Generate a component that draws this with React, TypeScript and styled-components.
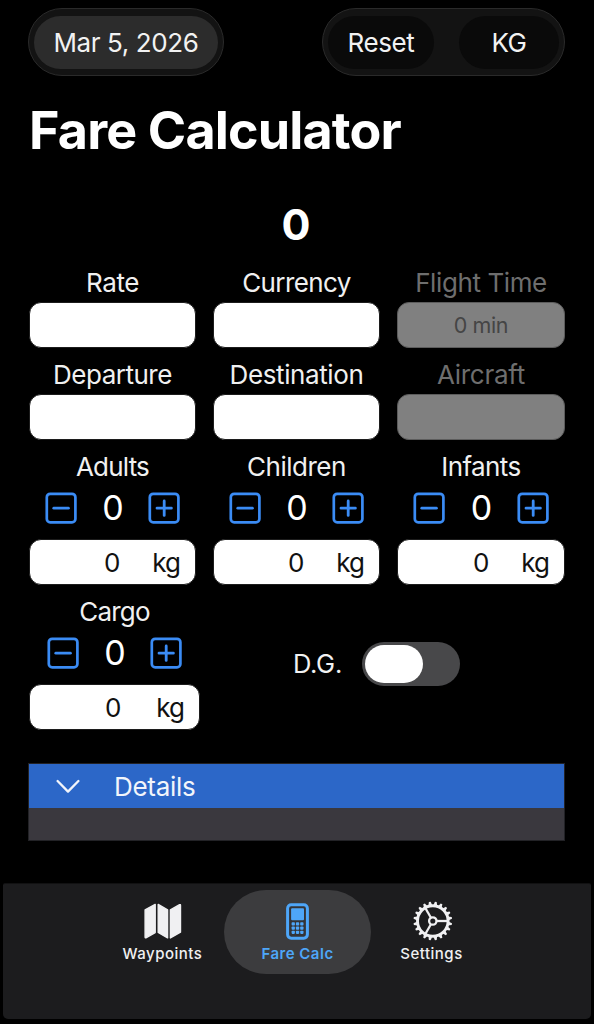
import React, { useState } from "react";
import styled, { createGlobalStyle } from "styled-components";

const GlobalStyle = createGlobalStyle`
  * { box-sizing: border-box; }
  html, body { margin: 0; background: #000; }
  body { font-family: Inter, "Liberation Sans", sans-serif; color: #f2f2f2; }
  button { font: inherit; color: inherit; border: 0; padding: 0; background: none; cursor: pointer; }
`;

const Screen = styled.div`
  width: 594px;
  height: 1024px;
  padding: 8px 3px 5px;
  display: flex;
  flex-direction: column;
  background: #000;
  overflow: hidden;
`;

const TopBar = styled.header`
  display: flex;
  justify-content: space-between;
  padding: 0 26px 0 25px;
  height: 68px;
  flex: none;
`;

const Capsule = styled.div`
  display: flex;
  justify-content: space-between;
  align-items: center;
  height: 68px;
  padding: 0 5px;
  border: 1px solid #2a2a2a;
  border-radius: 34px;
  background: #131313;
`;

const DateCapsule = styled(Capsule)`
  width: 196px;
`;

const ActionCapsule = styled(Capsule)`
  width: 243px;
`;

const PillButton = styled.button<{ $width: number; $fill: string }>`
  width: ${(p) => p.$width}px;
  height: 53px;
  border-radius: 27px;
  background: ${(p) => p.$fill};
  font-size: 26px;
  line-height: 54px;
  letter-spacing: -0.4px;
  white-space: nowrap;
`;

const Title = styled.h1`
  margin: 24px 0 0 26px;
  font-size: 52px;
  line-height: 62px;
  font-weight: 700;
  letter-spacing: -0.85px;
  color: #fff;
`;

const Total = styled.div`
  margin: 36px 0 0 -2px;
  font-size: 43px;
  line-height: 52px;
  font-weight: 650;
  text-align: center;
  color: #fff;
`;

const FieldGrid = styled.div`
  display: grid;
  grid-template-columns: 167px 167px 168px;
  column-gap: 17px;
  margin: 16px 0 0 26px;
`;

const Field = styled.div<{ $height: number; $dim?: boolean }>`
  display: flex;
  flex-direction: column;
  height: ${(p) => p.$height}px;
  color: ${(p) => (p.$dim ? "#6e6e6e" : "#f0f0f0")};
`;

const Label = styled.div<{ $spacing?: number }>`
  height: 36px;
  font-size: 26px;
  line-height: 34px;
  letter-spacing: ${(p) => p.$spacing ?? -0.4}px;
  text-align: center;
  white-space: nowrap;
`;

const Box = styled.div<{ $dim?: boolean }>`
  height: 46px;
  display: flex;
  align-items: center;
  justify-content: center;
  border: 1px solid ${(p) => (p.$dim ? "#5c5c5c" : "#1c1c1c")};
  border-radius: 12px;
  background: ${(p) => (p.$dim ? "#808080" : "#fff")};
  color: ${(p) => (p.$dim ? "#454545" : "#111")};
  font-size: 21.5px;
  letter-spacing: -0.4px;
`;

const WeightBox = styled(Box)<{ $gap: number }>`
  justify-content: flex-end;
  gap: ${(p) => p.$gap}px;
  padding-right: 15px;
  font-size: 26px;
  letter-spacing: -1px;
`;

const StepperRow = styled.div`
  display: flex;
  align-items: center;
  justify-content: space-between;
  width: 136px;
  height: 43px;
  margin: 0 auto 10px;
`;

const Count = styled.span`
  font-size: 34px;
  line-height: 40px;
  font-weight: 400;
  letter-spacing: -1px;
  color: #fff;
`;

const StepButton = styled.button`
  display: flex;
  width: 32px;
  height: 32px;
`;

const CargoRow = styled.div`
  display: flex;
  margin-left: 26px;
`;

const CargoField = styled(Field)`
  width: 171px;
`;

const DangerousGoods = styled.div`
  display: flex;
  align-items: center;
  height: 44px;
  margin: 47px 0 0 93px;
  gap: 20px;
  font-size: 25.5px;
  letter-spacing: -0.2px;
`;

const DangerousLabel = styled.span`
  padding-bottom: 2px;
`;

const Switch = styled.button<{ $on: boolean }>`
  display: flex;
  align-items: center;
  justify-content: ${(p) => (p.$on ? "flex-end" : "flex-start")};
  width: 98px;
  height: 44px;
  padding: 0 3px;
  border-radius: 22px;
  background: ${(p) => (p.$on ? "#34c759" : "#48484a")};
`;

const Knob = styled.span`
  width: 58px;
  height: 38px;
  border-radius: 19px;
  background: #fff;
`;

const Details = styled.section`
  margin: 18px 26px 0 25px;
  border: 1px solid #222226;
  background: #3a383e;
  height: 78px;
`;

const DetailsHeader = styled.button`
  display: flex;
  align-items: center;
  gap: 34px;
  width: 100%;
  height: 44px;
  padding-left: 27px;
  background: #2c67c8;
  color: #f2f5fb;
  font-size: 26px;
  letter-spacing: -0.3px;
`;

const TabBar = styled.nav`
  display: flex;
  align-items: flex-start;
  height: 136px;
  margin-top: auto;
  padding: 6px 0 0 98px;
  background: #1c1c1e;
  border-top: 1px solid #111112;
  border-radius: 2px 2px 5px 5px;
`;

const Tab = styled.button<{ $active?: boolean; $width: number }>`
  display: flex;
  flex-direction: column;
  align-items: center;
  width: ${(p) => p.$width}px;
  height: 84px;
  padding-top: 11px;
  border-radius: 42px;
  background: ${(p) => (p.$active ? "#3c3c3e" : "transparent")};
  color: ${(p) => (p.$active ? "#4ea6f8" : "#f0f0f2")};
`;

const TabText = styled.span<{ $active?: boolean }>`
  margin-top: 3px;
  font-size: 15px;
  line-height: 20px;
  font-weight: ${(p) => (p.$active ? 600 : 500)};
  letter-spacing: 0.5px;
  white-space: nowrap;
`;

function StepIcon({ plus }: { plus?: boolean }) {
  return (
    <svg width="32" height="32" viewBox="0 0 32 32" fill="none" stroke="#3b8cf5" strokeLinecap="round">
      <rect x="1.8" y="1.8" width="28.6" height="28.6" rx="3.4" strokeWidth="2.7" />
      <path d={plus ? "M9 16.2H23.4M16.2 9V23.4" : "M8.8 16.2H23.4"} strokeWidth="2.8" />
    </svg>
  );
}

function MapIcon() {
  return (
    <svg width="40" height="40" viewBox="0 0 40 40" fill="currentColor" stroke="currentColor" strokeWidth="1.4" strokeLinejoin="round">
      <path d="M2.1 8.8 12.2 3.4V31.6L2.9 36.8Q2.1 37 2.1 36Z" />
      <path d="M15.2 3.4 24.6 8.9V36.9L15.2 31.4Z" />
      <path d="M27.4 8.9 36.6 3.7Q37.5 3.3 37.5 4.4V31.2L27.4 36.9Z" />
    </svg>
  );
}

function PhoneIcon() {
  return (
    <svg width="40" height="40" viewBox="0.5 0 40 40" fill="currentColor">
      <rect x="10.1" y="3.8" width="19.8" height="33.4" rx="3.6" fill="#343437" stroke="currentColor" strokeWidth="3" />
      <rect x="13.6" y="7.2" width="12.9" height="12" rx="1" />
      {[21.3, 25.5, 29.7].map((y) =>
        [14.1, 18.4, 22.7].map((x) => <rect key={`${x}-${y}`} x={x} y={y} width="3.3" height="3.2" rx="0.8" />)
      )}
    </svg>
  );
}

function GearIcon() {
  const teeth = Array.from({ length: 20 }, (_, i) => i * 18 + 9);
  return (
    <svg width="40" height="40" viewBox="-0.8 0 40 40" fill="none" stroke="currentColor">
      <circle cx="20" cy="20" r="15.3" strokeWidth="2.9" />
      {teeth.map((a) => (
        <path key={a} d="M19.1 0.7H20.9L22 4.6H18Z" fill="currentColor" stroke="none" transform={`rotate(${a} 20 20)`} />
      ))}
      <circle cx="20" cy="20" r="3.7" strokeWidth="2.3" />
      {[90, 210, 330].map((a) => (
        <path key={a} d="M20 16V5" strokeWidth="2.3" transform={`rotate(${a} 20 20)`} />
      ))}
    </svg>
  );
}

function Passenger({ label, spacing, gap = 33 }: { label: string; spacing?: number; gap?: number }) {
  const [count, setCount] = useState(0);
  return (
    <>
      <Label $spacing={spacing}>{label}</Label>
      <StepperRow>
        <StepButton aria-label={`Remove ${label}`} onClick={() => setCount(Math.max(0, count - 1))}>
          <StepIcon />
        </StepButton>
        <Count>{count}</Count>
        <StepButton aria-label={`Add ${label}`} onClick={() => setCount(count + 1)}>
          <StepIcon plus />
        </StepButton>
      </StepperRow>
      <WeightBox $gap={gap}>
        <span>0</span>
        <span>kg</span>
      </WeightBox>
    </>
  );
}

export default function App() {
  const [dangerous, setDangerous] = useState(false);
  return (
    <>
      <GlobalStyle />
      <Screen>
        <TopBar>
          <DateCapsule>
            <PillButton $width={184} $fill="#2c2c2c">Mar 5, 2026</PillButton>
          </DateCapsule>
          <ActionCapsule>
            <PillButton $width={106} $fill="#0a0a0a">Reset</PillButton>
            <PillButton $width={100} $fill="#0a0a0a">KG</PillButton>
          </ActionCapsule>
        </TopBar>
        <Title>Fare Calculator</Title>
        <Total>0</Total>
        <FieldGrid>
          <Field $height={92}><Label>Rate</Label><Box /></Field>
          <Field $height={92}><Label $spacing={-0.6}>Currency</Label><Box /></Field>
          <Field $height={92} $dim><Label>Flight Time</Label><Box $dim>0 min</Box></Field>
          <Field $height={92}><Label $spacing={-0.5}>Departure</Label><Box /></Field>
          <Field $height={92}><Label>Destination</Label><Box /></Field>
          <Field $height={92} $dim><Label $spacing={-0.25}>Aircraft</Label><Box $dim /></Field>
          <Field $height={145}><Passenger label="Adults" spacing={-0.8} /></Field>
          <Field $height={145}><Passenger label="Children" spacing={-0.5} /></Field>
          <Field $height={145}><Passenger label="Infants" spacing={-0.6} /></Field>
        </FieldGrid>
        <CargoRow>
          <CargoField $height={150}><Passenger label="Cargo" spacing={-0.8} gap={36} /></CargoField>
          <DangerousGoods>
            <DangerousLabel>D.G.</DangerousLabel>
            <Switch $on={dangerous} role="switch" aria-checked={dangerous} aria-label="D.G." onClick={() => setDangerous(!dangerous)}>
              <Knob />
            </Switch>
          </DangerousGoods>
        </CargoRow>
        <Details>
          <DetailsHeader>
            <svg width="24" height="24" viewBox="0 0 24 24" fill="none" stroke="currentColor" strokeWidth="2.3" strokeLinecap="round" strokeLinejoin="round">
              <path d="M1.6 7 12 17.6 22.4 7" />
            </svg>
            Details
          </DetailsHeader>
        </Details>
        <TabBar>
          <Tab $width={123}><MapIcon /><TabText>Waypoints</TabText></Tab>
          <Tab $width={147} $active><PhoneIcon /><TabText $active>Fare Calc</TabText></Tab>
          <Tab $width={121}><GearIcon /><TabText>Settings</TabText></Tab>
        </TabBar>
      </Screen>
    </>
  );
}
